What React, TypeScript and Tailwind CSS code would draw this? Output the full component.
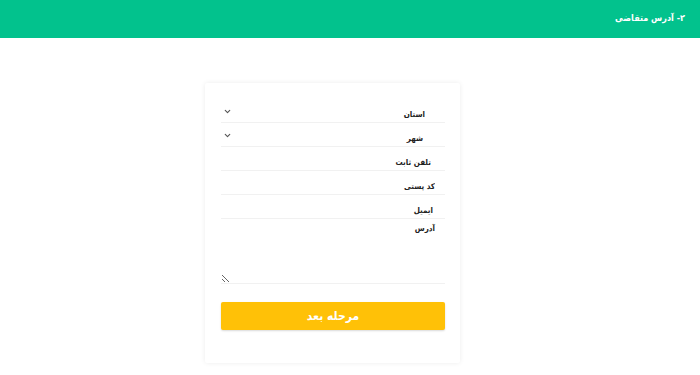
import { ChevronDown } from "lucide-react";

const font = { fontFamily: '"DejaVu Sans Condensed", "DejaVu Sans", sans-serif' };

function SelectRow({ label, pr }: { label: string; pr: string }) {
  return (
    <div className="h-[24px] flex items-end justify-between border-b border-[#f1f1f1] pb-[1px]">
      <span className={`text-[8px] font-bold text-[#222] ${pr}`}>{label}</span>
      <ChevronDown className="w-[9px] h-[9px] mb-[5px] ml-[2px] text-[#555]" strokeWidth={3} />
    </div>
  );
}

function InputRow({ label, pr }: { label: string; pr: string }) {
  return (
    <div className="h-[24px] flex items-end border-b border-[#f1f1f1] pb-[1px]">
      <input
        dir="rtl"
        placeholder={label}
        className={`w-full bg-transparent outline-none text-[8px] font-bold placeholder:text-[#222] ${pr}`}
      />
    </div>
  );
}

export default function App() {
  return (
    <div dir="rtl" className="min-h-screen bg-white" style={font}>
      <div className="h-[38px] bg-[#02c28d] flex items-center pr-[15px]">
        <span className="text-white text-[9px] font-bold">۲- آدرس متقاضی</span>
      </div>

      <div className="flex justify-center pt-[45px]">
        <div className="w-[255px] h-[280px] bg-white shadow-[0_0_5px_rgba(0,0,0,0.08)] rounded-[2px] pt-[16px] pr-[15px] pl-[16px] mr-[35px]">
          <SelectRow label="استان" pr="mr-[20px]" />
          <SelectRow label="شهر" pr="mr-[22px]" />
          <InputRow label="تلفن ثابت" pr="pr-[14px]" />
          <InputRow label="کد پستی" pr="pr-[10px]" />
          <InputRow label="ایمیل" pr="pr-[12px]" />
          <div className="border-b border-[#f1f1f1]">
            <textarea
              dir="rtl"
              placeholder="آدرس"
              className="block w-full h-[64px] bg-transparent outline-none text-[8px] font-bold placeholder:text-[#222] pr-[10px] pt-[4px] resize-y"
            />
          </div>
          <button className="mt-[18px] w-full h-[28px] bg-[#ffc107] text-white text-[12px] font-bold rounded-[2px] shadow-[0_1px_2px_rgba(0,0,0,0.15)]">
            مرحله بعد
          </button>
        </div>
      </div>
    </div>
  );
}
